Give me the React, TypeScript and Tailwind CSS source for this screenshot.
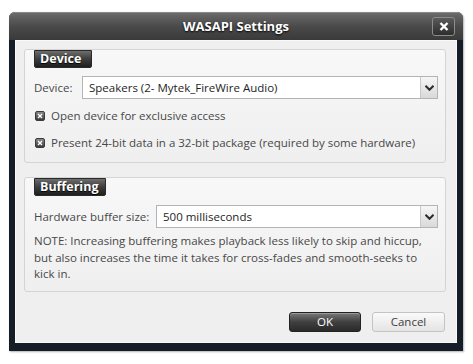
const font = { fontFamily: '"Open Sans", "Noto Sans", sans-serif' };

function Tab({ label, w }: { label: string; w: string }) {
  return (
    <div
      className={`ml-[9px] ${w} h-[18px] rounded-b-[2px] border border-[#2a2a2a] bg-gradient-to-b from-[#6e6e6e] via-[#3d3d3d] to-[#1f1f1f] pl-[5px] text-[12.5px] font-bold leading-[16px] text-white [text-shadow:0_1px_1px_#000]`}
    >
      {label}
    </div>
  );
}

function Select({ value, w }: { value: string; w: string }) {
  return (
    <div className={`flex ${w} h-[23px] border border-[#b4b4b4] bg-white`}>
      <div className="flex-1 pl-[6px] text-[11.5px] leading-[21px] text-[#1e1e1e]">{value}</div>
      <div className="flex w-[17px] items-center justify-center border-l border-[#c8c8c8] bg-gradient-to-b from-[#f6f6f6] to-[#d9d9d9]">
        <svg width="9" height="6" viewBox="0 0 9 6">
          <path d="M0.5 0.8 L4.5 4.8 L8.5 0.8" fill="none" stroke="#2b2b2b" strokeWidth="2" />
        </svg>
      </div>
    </div>
  );
}

function Check({ label }: { label: string }) {
  return (
    <div className="flex items-center gap-[6px]">
      <div className="flex h-[10px] w-[10px] items-center justify-center rounded-[2px] border border-[#3a3a3a] bg-gradient-to-b from-[#8a8a8a] to-[#3c3c3c]">
        <svg width="6" height="6" viewBox="0 0 6 6">
          <path d="M1 1 L5 5 M5 1 L1 5" stroke="#fff" strokeWidth="1.4" />
        </svg>
      </div>
      <span className="text-[11.5px] leading-[14px] text-[#484848]">{label}</span>
    </div>
  );
}

export default function App() {
  return (
    <div className="h-[364px] w-[473px] bg-white pl-[9px] pt-[12px]" style={font}>
      <div className="flex h-[339px] w-[454px] flex-col rounded-t-[6px] bg-[#151e28] shadow-[1px_1px_2px_rgba(0,0,0,0.3)]">
        {/* title bar */}
        <div className="relative flex h-[28px] items-center justify-center rounded-t-[6px] border-t border-[#8a8a8a] bg-gradient-to-b from-[#6a6a6a] via-[#4a4a4a] to-[#3a3a3a]">
          <span className="text-[13px] font-bold text-white [text-shadow:0_1px_2px_#000]">WASAPI Settings</span>
          <div className="absolute right-[8px] top-[4px] flex h-[19px] w-[23px] items-center justify-center rounded-[3px] border border-[#8c8c8c] bg-gradient-to-b from-[#5a5a5a] to-[#2e2e2e]">
            <svg width="10" height="9" viewBox="0 0 10 9">
              <path d="M1.5 1 L8.5 8 M8.5 1 L1.5 8" stroke="#fff" strokeWidth="2.4" />
            </svg>
          </div>
        </div>
        {/* body */}
        <div className="mx-[6px] mb-[8px] flex flex-1 flex-col border border-[#f9f9f9] bg-[#efefef] pl-[8px] pt-[8px]">
          <div className="flex h-[114px] w-[422px] flex-col rounded-[3px] border border-[#d4d4d4] bg-gradient-to-b from-[#f8f8f8] to-[#efefef]">
            <Tab label="Device" w="w-[58px]" />
            <div className="mt-[8px] flex items-center pl-[9px]">
              <span className="w-[48px] text-[11.5px] text-[#484848]">Device:</span>
              <Select value="Speakers (2- Mytek_FireWire Audio)" w="w-[356px]" />
            </div>
            <div className="mt-[10px] flex flex-col gap-[13px] pl-[10px]">
              <Check label="Open device for exclusive access" />
              <Check label="Present 24-bit data in a 32-bit package (required by some hardware)" />
            </div>
          </div>
          <div className="mt-[14px] flex h-[115px] w-[422px] flex-col rounded-[3px] border border-[#d4d4d4] bg-gradient-to-b from-[#f8f8f8] to-[#efefef]">
            <Tab label="Buffering" w="w-[72px]" />
            <div className="mt-[9px] flex items-center pl-[9px]">
              <span className="w-[122px] text-[11.5px] text-[#484848]">Hardware buffer size:</span>
              <Select value="500 milliseconds" w="w-[282px]" />
            </div>
            <p className="mt-[5px] pl-[9px] pr-[20px] text-[11.5px] leading-[16.5px] text-[#484848]">
              NOTE: Increasing buffering makes playback less likely to skip and hiccup, but also increases the time it takes for cross-fades and smooth-seeks to kick in.
            </p>
          </div>
          <div className="mt-[20px] flex justify-end gap-[11px] pr-[11px]">
            <div className="flex h-[20px] w-[72px] items-center justify-center rounded-[3px] border border-[#222] bg-gradient-to-b from-[#7a7a7a] via-[#404040] to-[#2a2a2a] text-[11.5px] text-white shadow-[inset_0_1px_0_#999]">
              OK
            </div>
            <div className="flex h-[20px] w-[73px] items-center justify-center rounded-[3px] border border-[#c4c4c4] bg-gradient-to-b from-[#fafafa] to-[#e4e4e4] text-[11.5px] text-[#3c3c3c]">
              Cancel
            </div>
          </div>
        </div>
      </div>
    </div>
  );
}
